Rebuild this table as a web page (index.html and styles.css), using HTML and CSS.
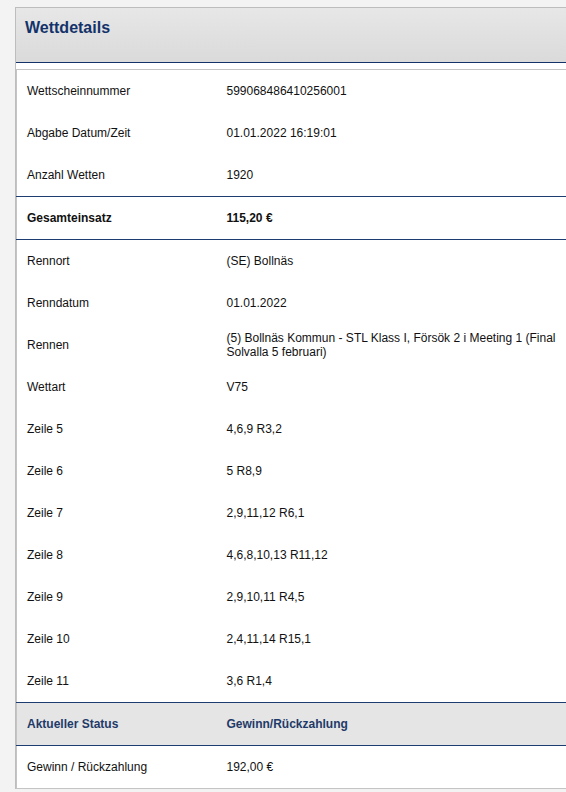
FILE: index.html
```html
<!DOCTYPE html>
<html lang="de">
<head>
  <meta charset="UTF-8" />
  <meta name="viewport" content="width=device-width, initial-scale=1" />
  <title>Wettdetails</title>
  <link rel="stylesheet" href="styles.css">
</head>
<body>

<div class="panel">
  <div class="panel-head">
    <h1>Wettdetails</h1>
  </div>

  <table class="details">
    <colgroup>
      <col class="col-label">
      <col>
    </colgroup>
    <tbody>
      <tr><td>Wettscheinnummer</td><td>599068486410256001</td></tr>
      <tr><td>Abgabe Datum/Zeit</td><td>01.01.2022 16:19:01</td></tr>
      <tr><td>Anzahl Wetten</td><td>1920</td></tr>
      <tr class="total"><td>Gesamteinsatz</td><td>115,20 €</td></tr>
      <tr><td>Rennort</td><td>(SE) Bollnäs</td></tr>
      <tr><td>Renndatum</td><td>01.01.2022</td></tr>
      <tr><td>Rennen</td><td>(5) Bollnäs Kommun - STL Klass I, Försök 2 i Meeting 1 (Final Solvalla 5 februari)</td></tr>
      <tr><td>Wettart</td><td>V75</td></tr>
      <tr><td>Zeile 5</td><td>4,6,9 R3,2</td></tr>
      <tr><td>Zeile 6</td><td>5 R8,9</td></tr>
      <tr><td>Zeile 7</td><td>2,9,11,12 R6,1</td></tr>
      <tr><td>Zeile 8</td><td>4,6,8,10,13 R11,12</td></tr>
      <tr><td>Zeile 9</td><td>2,9,10,11 R4,5</td></tr>
      <tr><td>Zeile 10</td><td>2,4,11,14 R15,1</td></tr>
      <tr><td>Zeile 11</td><td>3,6 R1,4</td></tr>
      <tr class="status"><td>Aktueller Status</td><td>Gewinn/Rückzahlung</td></tr>
      <tr><td>Gewinn / Rückzahlung</td><td>192,00 €</td></tr>
    </tbody>
  </table>
</div>

</body>
</html>
```

FILE: styles.css
```css
body {
  font-family: 'Liberation Sans', Arial, sans-serif;
  font-size: 12px;
  background-color: #f3f3f3;
  color: #111;
  margin: 0;
  padding: 7px 0 0 15px;
}
.panel {
  background: #fff;
  border-top: 1px solid #bdbdbd;
  border-left: 1px solid #bdbdbd;
}
.panel-head {
  height: 54px;
  background: linear-gradient(#e7e7e7, #dadada);
  border-bottom: 1px solid #14326a;
  padding: 0 9px;
}
.panel-head h1 {
  margin: 0;
  padding-top: 10px;
  font-size: 16px;
  line-height: 19px;
  color: #13326a;
}
.details {
  width: 100%;
  margin-top: 6px;
  border-collapse: collapse;
  table-layout: fixed;
  border-top: 1px solid #c4c4c4;
  border-left: 1px solid #c4c4c4;
  border-bottom: 1px solid #c4c4c4;
}
.col-label {
  width: 200px;
}
.details td {
  height: 42px;
  padding: 0 10px;
  vertical-align: middle;
  line-height: 14px;
}
.details td + td {
  padding-right: 0;
}
.total td {
  font-weight: bold;
  border-top: 1px solid #1d3d72;
  border-bottom: 1px solid #1d3d72;
}
.status td {
  font-weight: bold;
  color: #1f3a68;
  background-color: #e5e5e5;
  border-top: 1px solid #1d3d72;
  border-bottom: 1px solid #1d3d72;
}
```
